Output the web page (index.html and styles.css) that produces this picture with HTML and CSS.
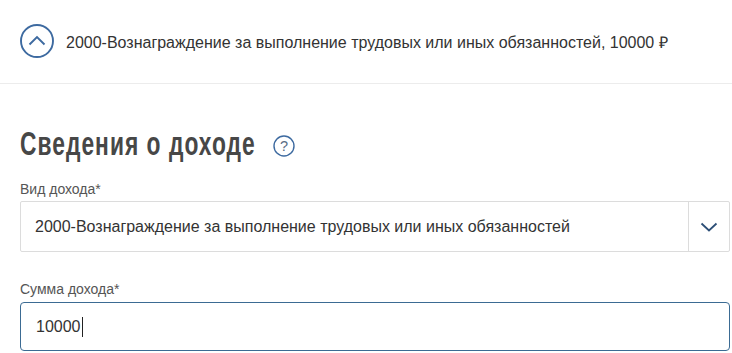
FILE: index.html
```html
<!DOCTYPE html>
<html lang="ru">
<head>
<meta charset="utf-8">
<link rel="stylesheet" href="styles.css">
</head>
<body>
<div class="summary">
  <span class="toggle">
    <svg width="34" height="34" viewBox="0 0 34 34"><circle cx="17" cy="17" r="16" fill="none" stroke="#3d6aa0" stroke-width="1.9"/><path d="M9.5 20.5 L17 13 L24.5 20.5" fill="none" stroke="#3d6aa0" stroke-width="1.9"/></svg>
  </span>
  <span class="summary-text">2000-Вознаграждение за выполнение трудовых или иных обязанностей, 10000 ₽</span>
</div>
<div class="section">
  <div class="title-row">
    <h2 class="title"><span class="title-inner">Сведения о доходе</span></h2>
    <span class="help">
      <svg width="22" height="22" viewBox="0 0 22 22"><circle cx="11" cy="11" r="10" fill="none" stroke="#3d6aa0" stroke-width="1.4"/><text x="11" y="16" text-anchor="middle" font-family="Liberation Sans, Arial, sans-serif" font-size="14.5" fill="#5a6e86">?</text></svg>
    </span>
  </div>
  <div class="label">Вид дохода*</div>
  <div class="select">
    <div class="select-value">2000-Вознаграждение за выполнение трудовых или иных обязанностей</div>
    <div class="select-arrow">
      <svg width="18" height="10" viewBox="0 0 18 10"><path d="M1.5 1.5 L9 8.5 L16.5 1.5" fill="none" stroke="#2d4f77" stroke-width="1.8"/></svg>
    </div>
  </div>
  <div class="label label-sum">Сумма дохода*</div>
  <div class="input"><span>10000</span><span class="caret"></span></div>
</div>
</body>
</html>
```
FILE: styles.css
```css
html, body { margin: 0; padding: 0; background: #fff; }
body { font-family: "Liberation Sans", Arial, sans-serif; color: #333; width: 732px; height: 353px; overflow: hidden; }
.summary { display: flex; align-items: center; height: 84px; border-bottom: 1px solid #ececec; padding-left: 20px; box-sizing: border-box; }
.toggle { display: flex; width: 34px; height: 34px; margin-right: 12px; margin-top: -2px; }
.summary-text { font-size: 16px; color: #333; }
.section { padding: 0 2px 0 20px; }
.title-row { display: flex; align-items: center; margin-top: 40px; height: 40px; }
.title { margin: 0; width: 232px; white-space: nowrap; font-family: "Liberation Sans", Arial, sans-serif; font-weight: bold; font-size: 33px; color: #474747; letter-spacing: 1.5px; }
.title-inner { display: inline-block; transform: scaleX(0.69); transform-origin: 0 50%; }
.help { display: flex; margin-left: 21px; margin-top: 4px; }
.label { font-size: 14px; color: #555; margin-top: 16px; height: 21px; line-height: 18px; }
.select { display: flex; height: 51px; border: 1px solid #dcdcdc; box-sizing: border-box; border-radius: 2px; }
.select-value { flex: 1; display: flex; align-items: center; padding-left: 14px; font-size: 16px; color: #333; }
.select-arrow { width: 40px; border-left: 1px solid #dcdcdc; display: flex; align-items: center; justify-content: center; }
.label-sum { margin-top: 28px; height: 22px; }
.input { display: flex; align-items: center; height: 49px; border: 1.5px solid #3b6b93; border-radius: 4px; box-sizing: border-box; padding-left: 15px; font-size: 16px; color: #333; }
.caret { width: 1px; height: 20px; background: #222; margin-left: 1px; }
```
